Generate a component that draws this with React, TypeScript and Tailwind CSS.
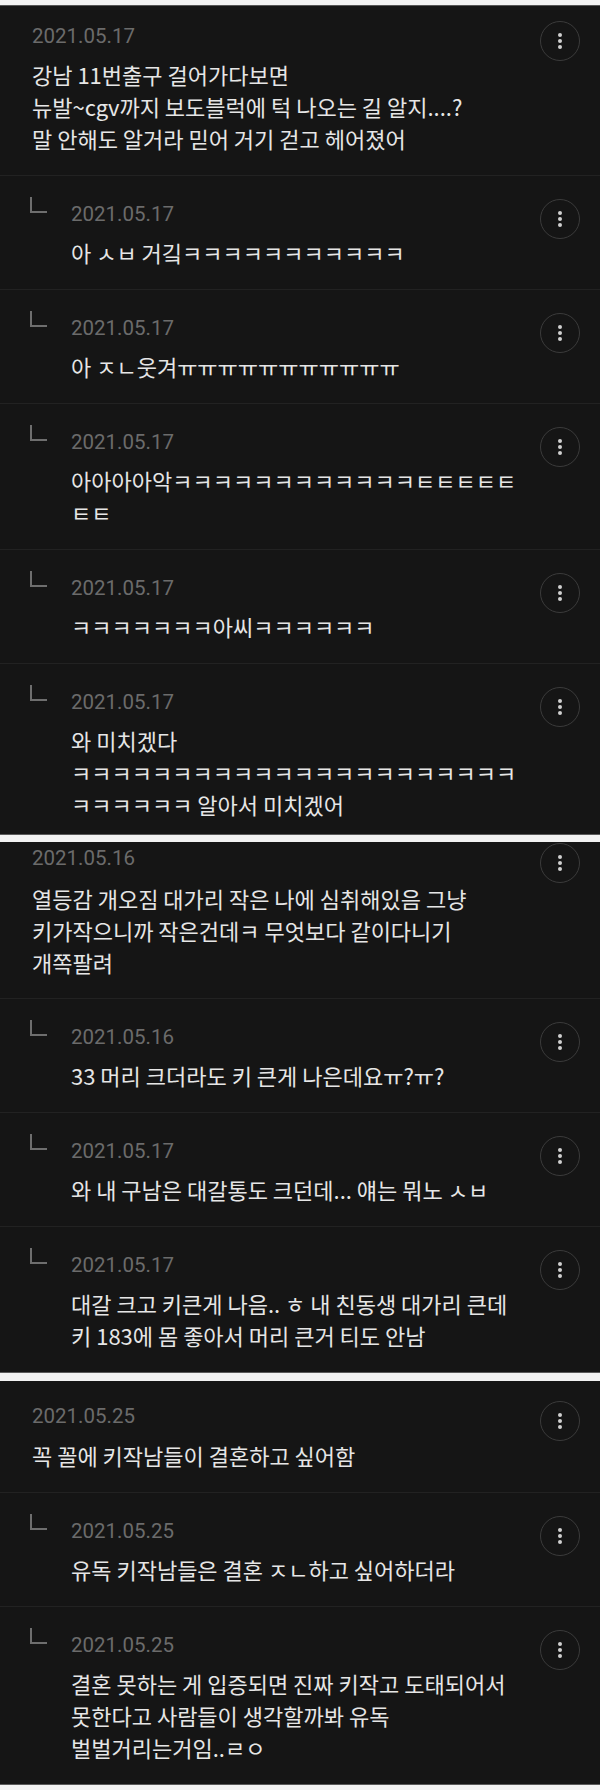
import clsx from "clsx";

type Comment = {
  date: string;
  lines: string[];
  reply?: boolean;
  pad?: string;
  gap?: string;
};

const groups: Comment[][] = [
  [
    {
      date: "2021.05.17",
      lines: [
        "강남 11번출구 걸어가다보면",
        "뉴발~cgv까지 보도블럭에 턱 나오는 길 알지....?",
        "말 안해도 알거라 믿어 거기 걷고 헤어졌어",
      ],
      pad: "pt-[16px] pb-[21px]",
    },
    { reply: true, date: "2021.05.17", lines: ["아 ㅅㅂ 거깈ㅋㅋㅋㅋㅋㅋㅋㅋㅋㅋㅋ"] },
    { reply: true, date: "2021.05.17", lines: ["아 ㅈㄴ웃겨ㅠㅠㅠㅠㅠㅠㅠㅠㅠㅠㅠ"] },
    {
      reply: true,
      date: "2021.05.17",
      lines: ["아아아아악ㅋㅋㅋㅋㅋㅋㅋㅋㅋㅋㅋㅋㅌㅌㅌㅌㅌ", "ㅌㅌ"],
    },
    { reply: true, date: "2021.05.17", lines: ["ㅋㅋㅋㅋㅋㅋㅋ아씨ㅋㅋㅋㅋㅋㅋ"] },
    {
      reply: true,
      date: "2021.05.17",
      lines: [
        "와 미치겠다",
        "ㅋㅋㅋㅋㅋㅋㅋㅋㅋㅋㅋㅋㅋㅋㅋㅋㅋㅋㅋㅋㅋㅋ",
        "ㅋㅋㅋㅋㅋㅋ 알아서 미치겠어",
      ],
      pad: "pt-6 pb-[14px]",
    },
  ],
  [
    {
      date: "2021.05.16",
      lines: [
        "열등감 개오짐 대가리 작은 나에 심취해있음 그냥",
        "키가작으니까 작은건데ㅋ 무엇보다 같이다니기",
        "개쪽팔려",
      ],
      pad: "pt-[2px] pb-5",
      gap: "mt-[10px]",
    },
    { reply: true, date: "2021.05.16", lines: ["33 머리 크더라도 키 큰게 나은데요ㅠ?ㅠ?"] },
    { reply: true, date: "2021.05.17", lines: ["와 내 구남은 대갈통도 크던데... 얘는 뭐노 ㅅㅂ"] },
    {
      reply: true,
      date: "2021.05.17",
      lines: ["대갈 크고 키큰게 나음.. ㅎ 내 친동생 대가리 큰데", "키 183에 몸 좋아서 머리 큰거 티도 안남"],
    },
  ],
  [
    {
      date: "2021.05.25",
      lines: ["꼭 꼴에 키작남들이 결혼하고 싶어함"],
      pad: "pt-[21px] pb-[21px]",
      gap: "mt-[9px]",
    },
    { reply: true, date: "2021.05.25", lines: ["유독 키작남들은 결혼 ㅈㄴ하고 싶어하더라"] },
    {
      reply: true,
      date: "2021.05.25",
      lines: [
        "결혼 못하는 게 입증되면 진짜 키작고 도태되어서",
        "못한다고 사람들이 생각할까봐 유독",
        "벌벌거리는거임..ㄹㅇ",
      ],
    },
  ],
];

function MoreButton() {
  return (
    <div className="-mt-px flex h-10 w-10 shrink-0 flex-col items-center justify-center gap-[2px] rounded-full border-[1.5px] border-[#3b3b3b]">
      <span className="h-1 w-1 rounded-full bg-[#d0d0d0]" />
      <span className="h-1 w-1 rounded-full bg-[#d0d0d0]" />
      <span className="h-1 w-1 rounded-full bg-[#d0d0d0]" />
    </div>
  );
}

function CommentRow({ c, first }: { c: Comment; first: boolean }) {
  return (
    <div
      className={clsx(
        "flex items-start pr-5",
        c.reply ? "pl-[30px]" : "pl-8",
        !first && "border-t border-[#222222]",
        c.pad ?? "pt-6 pb-[21px]"
      )}
    >
      {c.reply && (
        <div className="mr-6 -mt-[3px] h-4 w-[17px] shrink-0 border-b-2 border-l-2 border-[#6e6e6e]" />
      )}
      <div className="min-w-0 flex-1">
        <div className="font-['Roboto',sans-serif] text-[20.5px] leading-[28px] text-[#6b6b6b]">
          {c.date}
        </div>
        <div
          className={clsx(
            "font-['Noto_Sans_CJK_KR','Noto_Sans',sans-serif] text-[22px] leading-[32px] text-[#e6e6e6]",
            c.gap ?? "mt-2"
          )}
        >
          {c.lines.map((line, i) => (
            <div key={i} className="whitespace-nowrap">
              {line}
            </div>
          ))}
        </div>
      </div>
      <MoreButton />
    </div>
  );
}

export default function App() {
  return (
    <div className="h-[1790px] w-[600px] overflow-hidden bg-white">
      <div className="h-[5px] bg-[#f2f2f2]" />
      <div className="h-px bg-[#555555]" />
      {groups.map((group, gi) => (
        <div key={gi}>
          <div className="bg-[#151515]">
            {group.map((c, i) => (
              <CommentRow key={i} c={c} first={i === 0} />
            ))}
          </div>
          <div className="h-px bg-[#5a5a5a]" />
          <div
            className={clsx(
              "bg-[#f2f2f2]",
              gi === 0 ? "h-[7px]" : gi === 1 ? "h-2" : "h-[5px]"
            )}
          />
        </div>
      ))}
    </div>
  );
}
